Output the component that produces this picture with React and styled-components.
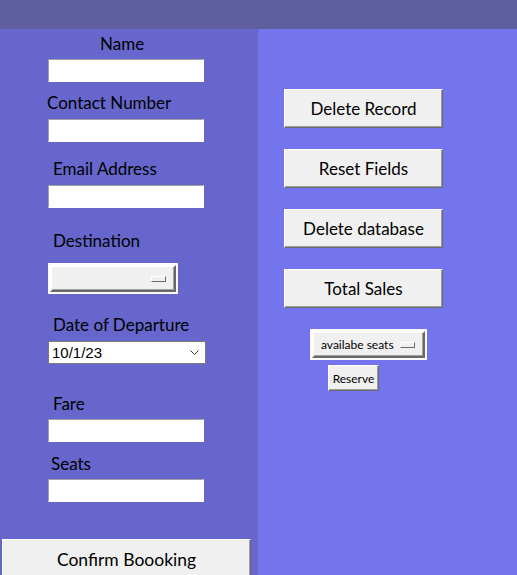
import styled, { createGlobalStyle } from 'styled-components';

const GlobalStyle = createGlobalStyle`
  html, body {
    margin: 0;
    padding: 0;
    height: 100%;
    overflow: hidden;
  }
  body {
    font-family: Lato, "Open Sans", sans-serif;
    color: #000;
  }
`;

const fields = [
  { label: 'Name', indent: 100, top: 5, gap: 5 },
  { label: 'Contact Number', indent: 47, top: 11, gap: 6 },
  { label: 'Email Address', indent: 53, top: 17, gap: 6 },
];

const App = () => {
  return (
    <Page>
      <GlobalStyle />
      <TopBar />
      <Main>
        <LeftPanel>
          {fields.map((f) => (
            <Field key={f.label} $top={f.top}>
              <Label $indent={f.indent} $gap={f.gap}>{f.label}</Label>
              <Entry />
            </Field>
          ))}

          <Field $top={23}>
            <Label $indent={53} $gap={12}>Destination</Label>
            <OptionMenu $width={130}>
              <MenuFace>
                <MenuText />
                <Indicator />
              </MenuFace>
            </OptionMenu>
          </Field>

          <Field $top={21}>
            <Label $indent={53} $gap={6}>Date of Departure</Label>
            <DateBox>
              <span>10/1/23</span>
              <svg width="9" height="6" viewBox="0 0 9 6">
                <path d="M0.5 0.5 L4.5 4.5 L8.5 0.5" fill="none" stroke="#333" strokeWidth="1" />
              </svg>
            </DateBox>
          </Field>

          <Field $top={30}>
            <Label $indent={53} $gap={5}>Fare</Label>
            <Entry />
          </Field>

          <Field $top={12}>
            <Label $indent={51} $gap={5}>Seats</Label>
            <Entry />
          </Field>

          <ConfirmButton>Confirm Boooking</ConfirmButton>
        </LeftPanel>

        <RightPanel>
          <BigButton>Delete Record</BigButton>
          <BigButton>Reset Fields</BigButton>
          <BigButton>Delete database</BigButton>
          <BigButton>Total Sales</BigButton>
          <SeatsMenu $width={117}>
            <MenuFace>
              <MenuText>availabe seats</MenuText>
              <Indicator />
            </MenuFace>
          </SeatsMenu>
          <SmallButton>Reserve</SmallButton>
        </RightPanel>
      </Main>
    </Page>
  );
};

const Page = styled.div`
  display: flex;
  flex-direction: column;
  height: 100vh;
  overflow: hidden;
`;

const TopBar = styled.div`
  height: 29px;
  background: #5f5f9f;
  flex-shrink: 0;
`;

const Main = styled.div`
  flex: 1;
  display: flex;
  min-height: 0;
`;

const LeftPanel = styled.div`
  width: 258px;
  background: #6666cc;
  display: flex;
  flex-direction: column;
`;

const RightPanel = styled.div`
  flex: 1;
  background: #7474ec;
  display: flex;
  flex-direction: column;
  align-items: flex-start;
  padding: 60px 0 0 26px;
  gap: 21px;
`;

const Field = styled.div`
  margin-top: ${(p) => p.$top}px;
  display: flex;
  flex-direction: column;
  align-items: flex-start;
`;

const Label = styled.div`
  font-size: 17px;
  line-height: 20px;
  height: 20px;
  padding-left: ${(p) => p.$indent}px;
  margin-bottom: ${(p) => p.$gap}px;
`;

const Entry = styled.input`
  box-sizing: border-box;
  width: 156px;
  height: 23px;
  margin-left: 48px;
  padding: 0 3px;
  background: #fff;
  border: 1px solid #fff;
  border-top-color: #a0a0a0;
  border-left-color: #a0a0a0;
  outline: none;
`;

const OptionMenu = styled.div`
  box-sizing: border-box;
  width: ${(p) => p.$width}px;
  height: 31px;
  margin-left: 48px;
  padding: 2px;
  background: #fafafa;
  display: flex;
`;

const SeatsMenu = styled(OptionMenu)`
  margin-left: 26px;
`;

const MenuFace = styled.div`
  flex: 1;
  box-sizing: border-box;
  display: flex;
  align-items: center;
  background: #f0f0f0;
  border: 2px solid;
  border-color: #fff #696969 #696969 #fff;
  box-shadow: inset -1px -1px 0 #a0a0a0;
  padding: 0 8px 0 7px;
`;

const MenuText = styled.span`
  flex: 1;
  font-size: 12px;
`;

const Indicator = styled.span`
  box-sizing: border-box;
  width: 15px;
  height: 6px;
  background: #f0f0f0;
  border: 1px solid;
  border-color: #fff #696969 #696969 #fff;
`;

const DateBox = styled.div`
  box-sizing: border-box;
  width: 158px;
  height: 23px;
  margin-left: 48px;
  background: #fff;
  border: 1px solid #7a7a7a;
  display: flex;
  align-items: center;
  justify-content: space-between;
  padding: 0 6px 0 3px;
  font-family: "Liberation Sans", Arial, sans-serif;
  font-size: 15px;
`;

const RaisedButton = styled.button`
  box-sizing: border-box;
  background: #f0f0f0;
  border: 1px solid;
  border-color: #fff #696969 #696969 #fff;
  box-shadow: inset -1px -1px 0 #a0a0a0;
  font-family: Lato, "Open Sans", sans-serif;
  color: #000;
  padding: 0;
  cursor: pointer;
`;

const BigButton = styled(RaisedButton)`
  width: 159px;
  height: 39px;
  font-size: 17px;
`;

const SmallButton = styled(RaisedButton)`
  width: 51px;
  height: 26px;
  font-size: 12px;
  margin: -16px 0 0 44px;
`;

const ConfirmButton = styled(RaisedButton)`
  width: 249px;
  height: 40px;
  margin: 37px 0 0 2px;
  font-size: 17.5px;
  flex-shrink: 0;
`;

export default App;
